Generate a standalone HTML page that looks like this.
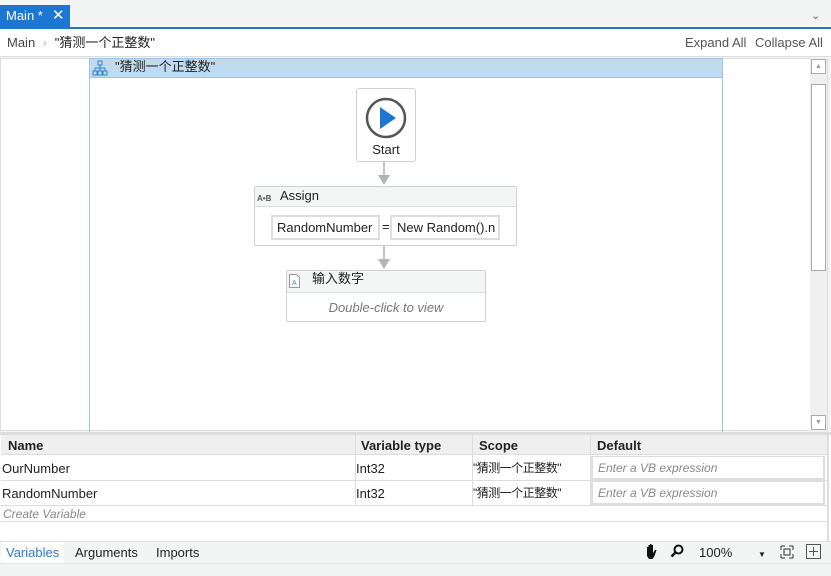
<!DOCTYPE html>
<html><head><meta charset="utf-8"><style>
*{box-sizing:border-box;margin:0;padding:0}
body{width:831px;height:576px;overflow:hidden;background:#f3f4f4;font-family:"Liberation Sans","Noto Sans CJK SC",sans-serif;font-size:13px;line-height:16px;color:#222;position:relative}
.a{position:absolute}
</style></head><body>
<div class="a" style="left:0;top:5px;width:70px;height:22px;background:#1c76d2;color:#fff;font-size:13px;line-height:22px;padding-left:6px">Main *<span style="position:absolute;left:52px;top:0;font-size:15px">✕</span></div>
<div class="a" style="left:0;top:27px;width:831px;height:2px;background:#1c76d2"></div>
<div class="a" style="left:811px;top:8px;color:#666;font-size:11px">⌄</div>
<div class="a" style="left:0;top:29px;width:831px;height:28px;background:#fff;border-bottom:1px solid #ddd"></div>
<div class="a" style="left:7px;top:35px;color:#444">Main <span style="color:#bbb;margin:0 4px">›</span> <span style="color:#222">"猜测一个正整数"</span></div>
<div class="a" style="left:685px;top:35px;color:#555">Expand All</div>
<div class="a" style="left:755px;top:35px;color:#555">Collapse All</div>
<div class="a" style="left:0;top:58px;width:828px;height:373px;background:#fff;border:1px solid #ddd"></div>
<div class="a" style="left:810px;top:58px;width:17px;height:373px;background:#f0f0f0"></div>
<div class="a" style="left:811px;top:59px;width:15px;height:15px;border:1px solid #aaa;background:#fff;color:#999;font-size:7px;text-align:center;line-height:13px">▲</div>
<div class="a" style="left:811px;top:84px;width:15px;height:187px;border:1px solid #aaa;background:#fff"></div>
<div class="a" style="left:811px;top:415px;width:15px;height:15px;border:1px solid #aaa;background:#fff;color:#999;font-size:7px;text-align:center;line-height:13px">▼</div>
<div class="a" style="left:89px;top:58px;width:634px;height:374px;border:1px solid #9cc4e8;border-bottom:none"></div>
<div class="a" style="left:89px;top:58px;width:634px;height:20px;background:#c0dbef;border:1px solid #9cc4e8"></div>
<svg class="a" style="left:92px;top:60px" width="16" height="16" viewBox="0 0 16 16" fill="none" stroke="#2f7fd0" stroke-width="1"><rect x="6" y="1" width="4" height="4"/><path d="M8 5v3M3 8h10M3 8v3M8 8v3M13 8v3"/><rect x="1" y="11" width="4" height="4"/><rect x="6" y="11" width="4" height="4"/><rect x="11" y="11" width="4" height="4"/></svg>
<div class="a" style="left:115px;top:59px">"猜测一个正整数"</div>
<div class="a" style="left:356px;top:88px;width:60px;height:74px;border:1px solid #d0d0d0;border-radius:3px;background:#fff"></div>
<svg class="a" style="left:365px;top:97px" width="42" height="42" viewBox="0 0 42 42"><circle cx="21" cy="21" r="19" fill="#fff" stroke="#555" stroke-width="2.5"/><path d="M15 10L31 21L15 32Z" fill="#1c76d2"/></svg>
<div class="a" style="left:356px;top:142px;width:60px;text-align:center">Start</div>
<div class="a" style="left:383px;top:162px;width:2px;height:15px;background:#c4c4c4"></div>
<div class="a" style="left:378px;top:175px;width:0;height:0;border-left:6px solid transparent;border-right:6px solid transparent;border-top:10px solid #b4b4b4"></div>
<div class="a" style="left:254px;top:186px;width:263px;height:60px;border:1px solid #d0d0d0;border-radius:2px;background:#fff"></div>
<div class="a" style="left:255px;top:187px;width:261px;height:20px;background:#f4f5f5;border-bottom:1px solid #ddd"></div>
<div class="a" style="left:257px;top:191px;font-size:8px;font-weight:bold;color:#555">A•B</div>
<div class="a" style="left:280px;top:188px">Assign</div>
<div class="a" style="left:271px;top:215px;width:109px;height:25px;border:2px solid #ddd;padding:3px 4px;white-space:nowrap;overflow:hidden">RandomNumber</div>
<div class="a" style="left:382px;top:219px">=</div>
<div class="a" style="left:390px;top:215px;width:110px;height:25px;border:2px solid #ddd;padding:3px 5px;white-space:nowrap;overflow:hidden">New Random().n</div>
<div class="a" style="left:383px;top:246px;width:2px;height:15px;background:#c4c4c4"></div>
<div class="a" style="left:378px;top:259px;width:0;height:0;border-left:6px solid transparent;border-right:6px solid transparent;border-top:10px solid #b4b4b4"></div>
<div class="a" style="left:286px;top:270px;width:200px;height:52px;border:1px solid #d0d0d0;border-radius:2px;background:#fff"></div>
<div class="a" style="left:287px;top:271px;width:198px;height:22px;background:#f4f5f5;border-bottom:1px solid #ddd"></div>
<svg class="a" style="left:289px;top:274px" width="11" height="14" viewBox="0 0 11 14"><path d="M.5 .5h7l3 3v10H.5z" fill="#fff" stroke="#999"/><text x="3" y="11" font-size="7" fill="#3a8ad8" font-family="Liberation Sans">A</text></svg>
<div class="a" style="left:312px;top:271px">输入数字</div>
<div class="a" style="left:286px;top:300px;width:200px;text-align:center;font-style:italic;color:#777">Double-click to view</div>
<div class="a" style="left:0;top:432px;width:831px;height:109px;background:#fff;border-top:3px solid #ddd"></div>
<div class="a" style="left:1px;top:435px;width:826px;height:20px;background:#efefef;border-bottom:1px solid #ddd"></div>
<div class="a" style="left:827px;top:435px;width:2px;height:106px;background:#ddd"></div>
<div class="a" style="left:8px;top:438px;font-weight:bold">Name</div>
<div class="a" style="left:361px;top:438px;font-weight:bold">Variable type</div>
<div class="a" style="left:479px;top:438px;font-weight:bold">Scope</div>
<div class="a" style="left:597px;top:438px;font-weight:bold">Default</div>
<div class="a" style="left:355px;top:435px;width:1px;height:70px;background:#ddd"></div>
<div class="a" style="left:472px;top:435px;width:1px;height:70px;background:#ddd"></div>
<div class="a" style="left:590px;top:435px;width:1px;height:70px;background:#ddd"></div>
<div class="a" style="left:1px;top:480px;width:826px;height:1px;background:#ddd"></div>
<div class="a" style="left:1px;top:505px;width:826px;height:1px;background:#ddd"></div>
<div class="a" style="left:1px;top:521px;width:826px;height:1px;background:#ddd"></div>
<div class="a" style="left:2px;top:461px">OurNumber</div>
<div class="a" style="left:356px;top:461px">Int32</div>
<div class="a" style="left:473px;top:460px;font-size:12px;letter-spacing:-0.5px">"猜测一个正整数"</div>
<div class="a" style="left:591px;top:456px;width:234px;height:24px;border:2px solid #ddd;border-top:1px solid #ddd;padding:3px 5px;font-style:italic;color:#888;font-size:12px">Enter a VB expression</div>
<div class="a" style="left:2px;top:486px">RandomNumber</div>
<div class="a" style="left:356px;top:486px">Int32</div>
<div class="a" style="left:473px;top:485px;font-size:12px;letter-spacing:-0.5px">"猜测一个正整数"</div>
<div class="a" style="left:591px;top:481px;width:234px;height:24px;border:2px solid #ddd;border-top:1px solid #ddd;padding:3px 5px;font-style:italic;color:#888;font-size:12px">Enter a VB expression</div>
<div class="a" style="left:3px;top:506px;font-style:italic;color:#888;font-size:12px">Create Variable</div>
<div class="a" style="left:0;top:541px;width:831px;height:23px;background:#f3f4f4;border-top:1px solid #ddd;border-bottom:1px solid #e3e3e3"></div>
<div class="a" style="left:1px;top:542px;width:63px;height:21px;background:#fff"></div>
<div class="a" style="left:6px;top:545px;color:#2b7bd0">Variables</div>
<div class="a" style="left:75px;top:545px">Arguments</div>
<div class="a" style="left:156px;top:545px">Imports</div>
<svg class="a" style="left:644px;top:543px" width="15" height="17" viewBox="0 0 15 17"><path d="M3 9V4h1.5v5V2h1.5v7V1h1.5v8V2h1.5v8l2-3h1.5l-2 6-2 3H5L3 13z" fill="#111"/></svg>
<svg class="a" style="left:670px;top:544px" width="14" height="14" viewBox="0 0 14 14"><circle cx="8.5" cy="5.5" r="4" fill="none" stroke="#111" stroke-width="2"/><path d="M6 8L1.5 12.5" stroke="#111" stroke-width="2.5"/></svg>
<div class="a" style="left:699px;top:545px">100%</div>
<div class="a" style="left:758px;top:547px;font-size:8px">▼</div>
<svg class="a" style="left:780px;top:545px" width="14" height="14" viewBox="0 0 14 14" fill="none" stroke="#333"><path d="M1 1h4M1 1v4M13 1h-4M13 1v4M1 13h4M1 13v-4M13 13h-4M13 13v-4"/><rect x="4" y="4" width="6" height="6"/></svg>
<svg class="a" style="left:806px;top:544px" width="15" height="15" viewBox="0 0 15 15" fill="none" stroke="#555"><rect x=".5" y=".5" width="14" height="14"/><path d="M7.5 3v9M3 7.5h9"/></svg>
</body></html>
